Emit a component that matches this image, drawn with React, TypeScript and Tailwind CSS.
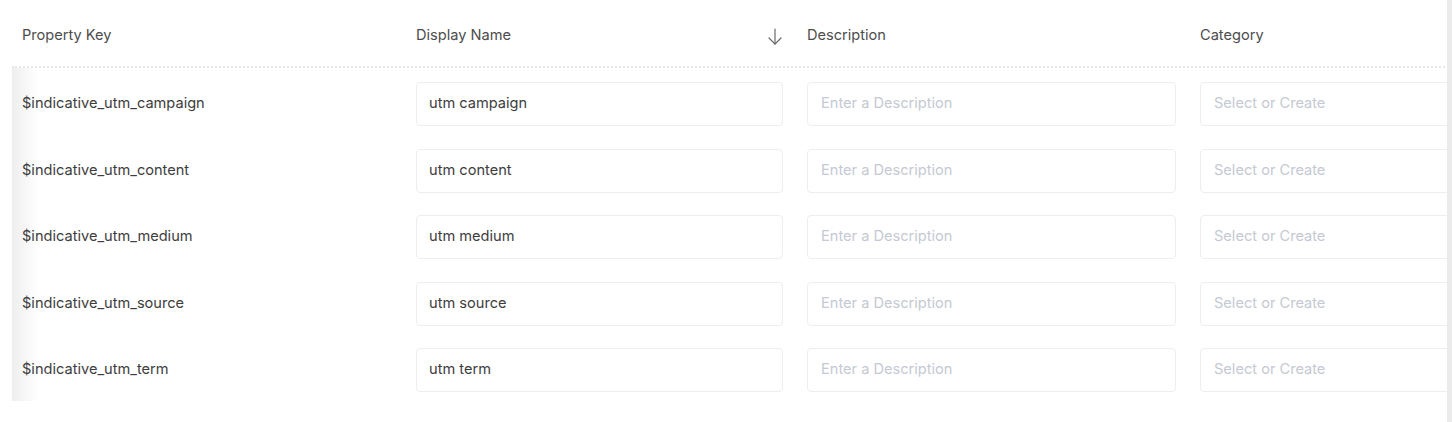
import React from "react";

const rows = [
  { key: "$indicative_utm_campaign", name: "utm campaign" },
  { key: "$indicative_utm_content", name: "utm content" },
  { key: "$indicative_utm_medium", name: "utm medium" },
  { key: "$indicative_utm_source", name: "utm source" },
  { key: "$indicative_utm_term", name: "utm term" },
];

function ArrowDown() {
  return (
    <svg width="14" height="17" viewBox="0 0 14 17" fill="none" stroke="#6b6b6b" strokeWidth="1.2" strokeLinecap="round" strokeLinejoin="round">
      <path d="M7 1 V16" />
      <path d="M1 10 L7 16 L13 10" />
    </svg>
  );
}

export default function App() {
  return (
    <div className="flex w-[1452px] h-[422px] bg-white overflow-hidden" style={{ fontFamily: "Inter, 'Noto Sans', sans-serif" }}>
      <div className="w-[1447px] overflow-hidden pl-[12px]">
        <div className="w-[1600px]">
          <div className="grid grid-cols-[404px_391px_393px_400px] h-[68px] items-center text-[14.6px] text-[#4d4d4d] border-b-2 border-dotted border-[#e4e6eb] pt-[6px]">
            <div className="pl-[10px]">Property Key</div>
            <div className="flex items-center justify-between pr-[25px]">
              <span>Display Name</span>
              <span className="flex pt-[2px]"><ArrowDown /></span>
            </div>
            <div>Description</div>
            <div>Category</div>
          </div>
          <div className="bg-[linear-gradient(to_right,#eeeeee,#ffffff_26px)]">
            {rows.map((r) => (
              <div key={r.key} className="grid grid-cols-[404px_391px_393px_400px] h-[66.5px] pt-[6px] items-center text-[14.6px]">
                <div className="pl-[10px] text-[#3d3d3d]">{r.key}</div>
                <div className="pr-[24px]">
                  <div className="h-[44px] flex items-center px-[12px] border border-[#eceef2] rounded-[4px] text-[#3d3d3d]">{r.name}</div>
                </div>
                <div className="pr-[24px]">
                  <div className="h-[44px] flex items-center px-[13px] border border-[#eceef2] rounded-[4px] text-[#c5c9d3]">Enter a Description</div>
                </div>
                <div className="pr-[24px]">
                  <div className="h-[44px] flex items-center px-[13px] border border-[#eceef2] rounded-[4px] text-[#c5c9d3]">Select or Create</div>
                </div>
              </div>
            ))}
          </div>
        </div>
      </div>
      <div className="w-[5px] h-full bg-[#ebebeb]" />
    </div>
  );
}
